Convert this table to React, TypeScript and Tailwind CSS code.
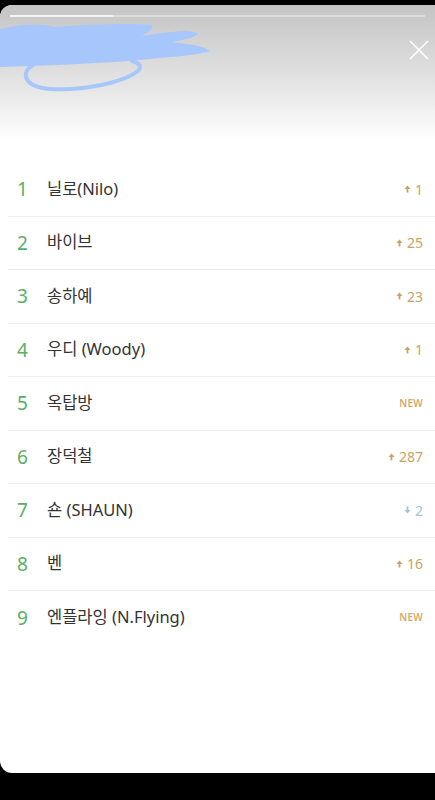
import React from 'react';

const rows = [
    { rank: 1, name: '닐로(Nilo)', change: 'up', value: '1' },
    { rank: 2, name: '바이브', change: 'up', value: '25' },
    { rank: 3, name: '송하예', change: 'up', value: '23' },
    { rank: 4, name: '우디 (Woody)', change: 'up', value: '1' },
    { rank: 5, name: '옥탑방', change: 'new', value: 'NEW' },
    { rank: 6, name: '장덕철', change: 'up', value: '287' },
    { rank: 7, name: '숀 (SHAUN)', change: 'down', value: '2' },
    { rank: 8, name: '벤', change: 'up', value: '16' },
    { rank: 9, name: '엔플라잉 (N.Flying)', change: 'new', value: 'NEW' },
];

function Change({ change, value }: { change: string; value: string }) {
    if (change === 'new') {
        return <span className="text-[10px] font-semibold tracking-wide text-[#d6a968]">NEW</span>;
    }
    const down = change === 'down';
    return (
        <span className={`flex items-center gap-[4px] text-[14px] ${down ? 'text-[#9cc3e0]' : 'text-[#c9a264]'}`}>
            <svg width="7" height="8" viewBox="0 0 7 8" className={down ? 'rotate-180' : ''}>
                <path d="M3.5 0.5 L6.5 4 H4.4 V7.5 H2.6 V4 H0.5 Z" fill="currentColor" />
            </svg>
            {value}
        </span>
    );
}

export default function App() {
    return (
        <div className="w-[435px] h-[800px] bg-black pt-[5px] overflow-hidden" style={{ fontFamily: '"Noto Sans", "Noto Sans CJK KR", sans-serif' }}>
            <div className="h-[768px] bg-white rounded-l-[12px] overflow-hidden">
                <div className="relative h-[158px] bg-gradient-to-b from-[#c4c4c4] via-[#e4e4e4] via-50% to-white to-85%">
                    <div className="flex pt-[10px] px-[10px]">
                        <div className="h-[2px] w-[103px] bg-[#f4f4f4]" />
                        <div className="h-[2px] flex-1 bg-[#dedede]" />
                    </div>
                    <svg className="absolute left-0 top-[16px]" width="215" height="72" viewBox="0 0 215 72">
                        <path d="M0 8 C 20 3, 40 2, 55 6 C 90 3, 130 2, 152 4 C 154 8, 147 12, 142 15 C 162 12, 185 8, 198 12 C 196 17, 182 19, 172 21 C 187 23, 202 24, 210 30 C 200 34, 170 36, 150 38 C 110 42, 60 44, 0 46 Z" fill="#a7c6fb" />
                        <path d="M33 44 C 20 52, 24 66, 50 68 C 82 70, 122 62, 138 50 C 142 46, 140 42, 132 40" fill="none" stroke="#a7c6fb" strokeWidth="4" strokeLinecap="round" />
                    </svg>
                    <svg className="absolute left-[409px] top-[35px]" width="20" height="20" viewBox="0 0 20 20">
                        <path d="M1 1 L19 19 M19 1 L1 19" stroke="white" strokeWidth="1.6" />
                    </svg>
                </div>
                <div className="pl-[8px]">
                    {rows.map((r, i) => (
                        <div key={r.rank} className={`flex items-center h-[53.5px] pr-[12px] ${i < rows.length - 1 ? 'border-b border-[#eeeeee]' : ''}`}>
                            <span className="w-[39px] pl-[9px] text-[19px] text-[#5aae66]">{r.rank}</span>
                            <span className="flex-1 text-[16.5px] text-[#333333]">{r.name}</span>
                            <Change change={r.change} value={r.value} />
                        </div>
                    ))}
                </div>
            </div>
        </div>
    );
}
